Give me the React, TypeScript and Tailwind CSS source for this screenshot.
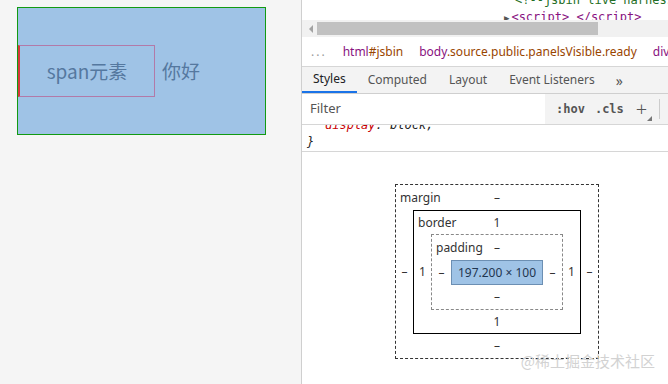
const ui = { fontFamily: '"Segoe UI", "Noto Sans", "Liberation Sans", sans-serif' };
const mono = { fontFamily: '"DejaVu Sans Mono", "Liberation Mono", monospace' };
const cjk = { fontFamily: '"Noto Sans CJK SC", "Noto Sans", sans-serif' };

function Preview() {
  return (
    <div className="h-full w-[301px] shrink-0 bg-[#f5f5f5] pl-[17px] pt-[7px]">
      <div className="flex h-[128px] w-[249px] items-center border border-[#129a12] bg-[#9fc3e6]" style={cjk}>
        <span className="flex h-[52px] w-[137px] items-center justify-center border border-l-2 border-[#b27aa8] border-l-[#d63a3a] text-[19px] text-[#55789f]">
          span元素
        </span>
        <span className="ml-[7px] text-[19px] text-[#55789f]">你好</span>
      </div>
    </div>
  );
}

function Breadcrumbs() {
  return (
    <div className="flex h-[30px] items-center gap-[16px] whitespace-nowrap border-b border-[#d6d6d6] pl-[9px] text-[12px]" style={ui}>
      <span className="tracking-[2px] text-[#9a9a9a]">...</span>
      <span>
        <span className="text-[#881280]">html</span>
        <span className="text-[#994500]">#jsbin</span>
      </span>
      <span>
        <span className="text-[#881280]">body</span>
        <span className="text-[#994500]">.source.public.panelsVisible.ready</span>
      </span>
      <span className="text-[#881280]">div</span>
    </div>
  );
}

function Tabs() {
  const tabs = ['Styles', 'Computed', 'Layout', 'Event Listeners'];
  return (
    <div className="flex h-[27px] items-stretch whitespace-nowrap border-b border-[#cfcfcf] bg-[#f3f3f3] text-[12px] text-[#333]" style={ui}>
      {tabs.map((t, i) => (
        <div
          key={t}
          className={
            i === 0
              ? 'flex items-center border-b-2 border-[#1a73e8] px-[11px] text-[#202124]'
              : 'flex items-center px-[11px] text-[#555]'
          }
        >
          {t}
        </div>
      ))}
      <div className="flex items-center px-[10px] text-[14px] text-[#555]">»</div>
    </div>
  );
}

function FilterRow() {
  return (
    <div className="flex h-[31px] items-center border-b border-[#d6d6d6] bg-[#f3f3f3]" style={ui}>
      <div className="flex h-full w-[243px] items-center bg-white pl-[8px] text-[13px] text-[#555]">Filter</div>
      <span className="ml-[11px] text-[12px] font-bold text-[#555]" style={mono}>:hov</span>
      <span className="ml-[10px] text-[12px] font-bold text-[#555]" style={mono}>.cls</span>
      <span className="relative ml-[12px] text-[20px] font-light leading-none text-[#555]">
        +
        <span className="absolute -bottom-[2px] -right-[5px] h-0 w-0 border-b-[5px] border-l-[5px] border-b-[#777] border-l-transparent" />
      </span>
      <span className="ml-[12px] h-[20px] w-px bg-[#ccc]" />
    </div>
  );
}

function Box({
  label,
  top,
  side,
  bottom,
  cls,
  topH,
  botH,
  sideW,
  children,
}: {
  label: string;
  top: string;
  side: string;
  bottom: string;
  cls: string;
  topH: string;
  botH: string;
  sideW: string;
  children: React.ReactNode;
}) {
  return (
    <div className={'flex flex-col ' + cls}>
      <div className={'grid grid-cols-[1fr_auto_1fr] items-center ' + topH}>
        <span className="pl-[4px]">{label}</span>
        <span>{top}</span>
        <span />
      </div>
      <div className="flex items-center">
        <div className={'shrink-0 text-center ' + sideW}>{side}</div>
        {children}
        <div className={'shrink-0 text-center ' + sideW}>{side}</div>
      </div>
      <div className={'flex items-center justify-center ' + botH}>{bottom}</div>
    </div>
  );
}

function BoxModel() {
  return (
    <div className="flex justify-center pt-[32px] text-[12px] text-[#333]" style={ui}>
      <Box label="margin" top="–" side="–" bottom="–" cls="w-[204px] border border-dashed border-[#333]" topH="h-[25px]" botH="h-[24px]" sideW="w-[17px]">
        <Box label="border" top="1" side="1" bottom="1" cls="w-[168px] border border-black" topH="h-[23px]" botH="h-[23px]" sideW="w-[17px]">
          <Box label="padding" top="–" side="–" bottom="–" cls="w-[132px] border border-dashed border-[#888]" topH="h-[25px]" botH="h-[24px]" sideW="w-[19px]">
            <div className="flex h-[25px] w-[92px] items-center justify-center border border-[#6c8fb3] bg-[#9fc3e6] text-[#1f3650]">
              197.200 × 100
            </div>
          </Box>
        </Box>
      </Box>
    </div>
  );
}

function DevTools() {
  return (
    <div className="flex h-full w-[391px] shrink-0 flex-col border-l border-[#cfcfcf] bg-white">
      <div className="h-[20px] overflow-hidden whitespace-nowrap text-[12px] leading-[17px]" style={mono}>
        <div className="-mt-[8px] pl-[213px] text-[#236e25]">&lt;!--jsbin live harness--&gt;</div>
        <div className="pl-[202px] text-[#881280]">
          <span className="mr-[2px] text-[9px] text-[#555]">▶</span>&lt;script&gt; &lt;/script&gt;
        </div>
      </div>
      <div className="flex h-[17px] items-center bg-[#f1f1f1]">
        <span className="ml-[7px] mr-[4px] h-0 w-0 border-y-[4px] border-r-[4px] border-y-transparent border-r-[#a3a3a3]" />
        <div className="h-[13px] w-[281px] bg-[#c1c1c1]" />
      </div>
      <Breadcrumbs />
      <Tabs />
      <FilterRow />
      <div className="h-[27px] overflow-hidden border-b border-[#d6d6d6] text-[12px] italic leading-[17px]" style={mono}>
        <div className="-mt-[8px] pl-[23px]">
          <span className="text-[#c80000]">display</span>
          <span className="text-[#222]">: block;</span>
        </div>
        <div className="pl-[5px] text-[#222]">{'}'}</div>
      </div>
      <BoxModel />
    </div>
  );
}

export default function App() {
  return (
    <div className="relative flex h-[384px] w-[668px] overflow-hidden">
      <Preview />
      <DevTools />
      <div className="absolute bottom-[12px] right-[13px] text-[15px] text-[#d2d2d2]" style={cjk}>
        @稀土掘金技术社区
      </div>
    </div>
  );
}
